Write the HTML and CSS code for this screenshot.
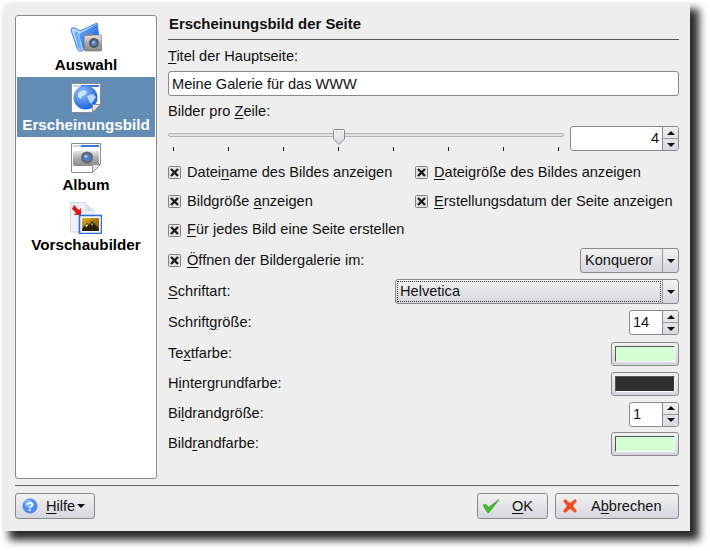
FILE: index.html
```html
<!DOCTYPE html>
<html lang="de">
<head>
<meta charset="utf-8">
<title>Erscheinungsbild der Seite</title>
<link rel="stylesheet" href="styles.css">
</head>
<body>
<svg class="defs" width="0" height="0" aria-hidden="true">
  <defs>
    <linearGradient id="blue" x1="0" y1="0" x2="1" y2="1"><stop offset="0" stop-color="#6db4fa"/><stop offset="1" stop-color="#1250dc"/></linearGradient>
    <linearGradient id="cam" x1="0" y1="0" x2="0" y2="1"><stop offset="0" stop-color="#e6e6e6"/><stop offset=".5" stop-color="#ababab"/><stop offset="1" stop-color="#8a8a8a"/></linearGradient>
    <radialGradient id="globe" cx=".35" cy=".3" r=".8"><stop offset="0" stop-color="#8fc4fb"/><stop offset="1" stop-color="#0f58d8"/></radialGradient>
    <linearGradient id="gold" x1="0" y1="0" x2="1" y2="1"><stop offset="0" stop-color="#e8b020"/><stop offset="1" stop-color="#6a4808"/></linearGradient>
    <linearGradient id="btn" x1="0" y1="0" x2="0" y2="1"><stop offset="0" stop-color="#f4f4f4"/><stop offset="1" stop-color="#d6d6de"/></linearGradient>
    <symbol id="check-x" viewBox="0 0 13 13">
      <rect x=".5" y=".5" width="12" height="12" rx="1" fill="#e4e4e8" stroke="#808080"/>
      <path d="M3 3l7 7M10 3l-7 7" stroke="#1c1c1c" stroke-width="2.400"/>
    </symbol>
    <symbol id="page" viewBox="0 0 32 32">
      <path d="M1.500 1.500H30.500V22.500L22.500 30.500H1.500Z" fill="#fff" stroke="#8c8c8c"/>
      <rect x="3" y="3" width="26" height="2" fill="#3b78d8"/>
      <rect x="3" y="3" width="8" height="2" fill="#c8d8f0"/>
    </symbol>
  </defs>
</svg>

<main class="window">
  <div class="content">
    <nav class="sidebar">
      <a class="nav-item">
        <svg class="nav-icon" viewBox="0 0 32 32">
          <path d="M1 8Q1 5 5 6L10 9 27 1 29 16 12 29Q8 30 7 26Z" fill="#bcdcfb" stroke="#3a7be0"/>
          <path d="M9 12L27 2 29 17 13 27Z" fill="url(#blue)"/>
          <path d="M4 9L8 26 12 28 8 10Z" fill="#6aaef5"/>
          <rect x="14" y="13" width="18" height="16" rx="2" fill="url(#cam)" stroke="#6e6e6e" stroke-width=".7"/>
          <rect x="16" y="11.500" width="6" height="2.500" fill="#8a8a8a"/>
          <circle cx="24" cy="21" r="5" fill="#555"/>
          <circle cx="24" cy="21" r="3" fill="#4d7fd0"/>
          <circle cx="23.500" cy="20.500" r="1" fill="#cfe2ff"/>
        </svg>
        <span>Auswahl</span>
      </a>
      <a class="nav-item is-active">
        <svg class="nav-icon" viewBox="0 0 32 32">
          <use href="#page"/>
          <circle cx="15.500" cy="15.500" r="12" fill="url(#globe)"/>
          <path d="M8 11l6-3 3 2-2 3-3 1-1 3-3-2ZM17 14l6-2 3 3-2 3-3 4-2-3Z" fill="#e6f1fd" opacity=".75"/>
          <path d="M22.500 30.500V23.500Q22.500 22.500 23.500 22.500H30.500Z" fill="#e4e4e4" stroke="#8c8c8c"/>
        </svg>
        <span>Erscheinungsbild</span>
      </a>
      <a class="nav-item">
        <svg class="nav-icon" viewBox="0 0 32 32">
          <use href="#page"/>
          <rect x="3" y="9" width="26" height="15" rx="1.500" fill="url(#cam)"/>
          <circle cx="17" cy="15.500" r="6" fill="#666"/>
          <circle cx="17" cy="15.500" r="3.800" fill="#4d7fd0"/>
          <circle cx="16" cy="14.500" r="1.200" fill="#d6e6ff"/>
          <path d="M22.500 30.500V23.500Q22.500 22.500 23.500 22.500H30.500Z" fill="#e4e4e4" stroke="#8c8c8c"/>
        </svg>
        <span>Album</span>
      </a>
      <a class="nav-item">
        <svg class="nav-icon" viewBox="0 0 32 32">
          <path d="M.5 .5H15L24 9V30H.5Z" fill="#f0f0fa" stroke="#d4d4e4"/>
          <path d="M15 .5V9H24Z" fill="#dcdcf0"/>
          <path d="M4 3l5 5 2-2v7H4l2-2-4-4Z" fill="#e01818"/>
          <rect x="9.500" y="13.500" width="22" height="18" fill="#fff" stroke="#2f6fd8" stroke-width="1.600"/>
          <rect x="12" y="16" width="17" height="13" fill="url(#gold)"/>
          <path d="M12 27l5-6 2 2 3-4 7 8v2H12Z" fill="#2c2108"/>
          <path d="M15 24l2-2 1 1-1 2ZM21 21l2 1-1 2Z" fill="#f6e3a0"/>
        </svg>
        <span>Vorschaubilder</span>
      </a>
    </nav>

    <section class="page">
      <h1 class="page-title">Erscheinungsbild der Seite</h1>
      <div class="label-row"><label><u>T</u>itel der Hauptseite:</label></div>
      <input class="text-input" type="text" value="Meine Galerie für das WWW">
      <div class="label-row"><label>Bilder pro <u>Z</u>eile:</label></div>

      <div class="slider-row">
        <div class="slider">
          <div class="groove"></div>
          <svg class="thumb" viewBox="0 0 12 16">
            <path d="M1.500 .5H10.500Q11.500 .5 11.500 1.500V10L6 15.500 .5 10V1.500Q.5 .5 1.500 .5Z" fill="url(#btn)" stroke="#8a8a8a"/>
            <path d="M3.500 3h.8M7.500 3h.8" stroke="#9a9a9a"/>
          </svg>
          <div class="ticks"><i></i><i></i><i></i><i></i><i></i><i></i><i></i><i></i></div>
        </div>
        <div class="spin spin-wide">
          <span class="spin-value is-right">4</span>
          <span class="spin-arrows"><b class="up"></b><b class="down"></b></span>
        </div>
      </div>

      <div class="check-grid">
        <div class="check"><svg class="box"><use href="#check-x"/></svg>Datei<u>n</u>ame des Bildes anzeigen</div>
        <div class="check"><svg class="box"><use href="#check-x"/></svg><u>D</u>ateigröße des Bildes anzeigen</div>
        <div class="check"><svg class="box"><use href="#check-x"/></svg>Bildgröße <u>a</u>nzeigen</div>
        <div class="check"><svg class="box"><use href="#check-x"/></svg><u>E</u>rstellungsdatum der Seite anzeigen</div>
        <div class="check"><svg class="box"><use href="#check-x"/></svg><u>F</u>ür jedes Bild eine Seite erstellen</div>
      </div>

      <div class="form">
        <div class="form-row">
          <div class="check"><svg class="box"><use href="#check-x"/></svg><u>Ö</u>ffnen der Bildergalerie im:</div>
          <div class="combo combo-konq"><span class="combo-text">Konqueror</span><span class="combo-arrow"><b class="down"></b></span></div>
        </div>
        <div class="form-row">
          <label><u>S</u>chriftart:</label>
          <div class="combo combo-font"><span class="combo-text is-focus">Helvetica</span><span class="combo-arrow"><b class="down"></b></span></div>
        </div>
        <div class="form-row">
          <label>Schrift<u>g</u>röße:</label>
          <div class="spin spin-small"><span class="spin-value">14</span><span class="spin-arrows"><b class="up"></b><b class="down"></b></span></div>
        </div>
        <div class="form-row">
          <label>Te<u>x</u>tfarbe:</label>
          <div class="color"><span class="swatch is-green"></span></div>
        </div>
        <div class="form-row is-short">
          <label>H<u>i</u>ntergrundfarbe:</label>
          <div class="color"><span class="swatch is-dark"></span></div>
        </div>
        <div class="form-row is-short">
          <label>Bi<u>l</u>drandgröße:</label>
          <div class="spin spin-small"><span class="spin-value">1</span><span class="spin-arrows"><b class="up"></b><b class="down"></b></span></div>
        </div>
        <div class="form-row is-short">
          <label>Bild<u>r</u>andfarbe:</label>
          <div class="color"><span class="swatch is-green"></span></div>
        </div>
      </div>
    </section>
  </div>

  <footer class="footer">
    <button class="btn btn-help" type="button">
      <svg class="btn-icon-help" viewBox="0 0 16 16">
        <circle cx="8" cy="8" r="7.500" fill="#4f8cf0"/>
        <circle cx="6.500" cy="5.500" r="4" fill="#a9cdfb" opacity=".6"/>
        <text x="8" y="12.500" text-anchor="middle" class="help-q">?</text>
      </svg>
      <span class="help-label"><u>H</u>ilfe</span><b class="down"></b>
    </button>
    <div class="footer-right">
      <button class="btn btn-ok" type="button">
        <svg class="btn-icon" viewBox="0 0 16 14"><path d="M0 6L3 5.500 5.500 8.500 16 .5 6 13.500 4.500 13.500Z" fill="#3cc02c" stroke="#1f9414" stroke-width=".6" stroke-linejoin="round"/></svg>
        <span class="btn-label"><u>O</u>K</span>
      </button>
      <button class="btn btn-cancel" type="button">
        <svg class="btn-icon" viewBox="0 0 16 16"><path d="M3 1l5 4 5-4 2 2-4 5 4 5-2 2-5-4-5 4-2-2 4-5-4-5Z" fill="#ee4a22" stroke="#f8a880" stroke-width=".6"/></svg>
        <span class="btn-label">A<u>b</u>brechen</span>
      </button>
    </div>
  </footer>
</main>
</body>
</html>
```
FILE: styles.css
```css
* { box-sizing: border-box; }
html, body { margin: 0; padding: 0; background: #fff; }
body {
  width: 710px;
  height: 551px;
  overflow: hidden;
  padding: 4px 0 0 4px;
  font-family: "Liberation Sans", Arial, sans-serif;
  font-size: 14.600px;
  color: #111;
}
.defs { display: block; height: 0; }
u { text-underline-offset: 2px; text-decoration-thickness: 1px; }

.window {
  width: 686px;
  height: 527px;
  background: #eeeeee;
  padding: 11px 11px 0 11px;
  box-shadow: 7px 7px 8px 2px #2a2a2a;
  display: flex;
  flex-direction: column;
}
.content { display: flex; gap: 11px; height: 464px; }

.sidebar {
  width: 142px;
  height: 464px;
  background: #fff;
  border: 1px solid #8a8a8a;
  border-radius: 3px;
  padding: 1px;
  display: flex;
  flex-direction: column;
  flex: none;
}
.nav-item {
  height: 60px;
  padding-top: 5px;
  display: flex;
  flex-direction: column;
  align-items: center;
  font-weight: bold;
  font-size: 15.200px;
  line-height: 18px;
  color: #000;
}
.nav-item.is-active { background: #628cb4; color: #fff; }
.nav-icon { width: 32px; height: 32px; display: block; margin-bottom: 2px; }

.page { width: 511px; flex: none; display: flex; flex-direction: column; }
.page-title {
  margin: 0;
  height: 25px;
  padding-left: 1px;
  border-bottom: 1px solid #555;
  font-size: 14.900px;
  line-height: 18px;
  font-weight: bold;
  color: #111;
}
.label-row { height: 31px; display: flex; align-items: center; }
.label-row + .text-input + .label-row { height: 30px; }
.text-input {
  display: block;
  width: 511px;
  height: 25px;
  border: 1px solid #8a8a8a;
  border-radius: 3px;
  background: #fff;
  padding: 0 3px;
  font: inherit;
  color: #111;
}

.slider-row { display: flex; justify-content: space-between; height: 25px; }
.slider { width: 396px; position: relative; }
.groove {
  height: 4px;
  margin-top: 7px;
  background: #e2e2e2;
  border: 1px solid #b4b4b4;
  border-radius: 2px;
}
.thumb { position: absolute; left: 165px; top: 3px; width: 12px; height: 16px; }
.ticks { display: flex; justify-content: space-between; padding: 10px 5px 0 5px; }
.ticks i { width: 1px; height: 4px; background: #222; display: block; }

.spin {
  display: flex;
  height: 25px;
  border: 1px solid #8a8a8a;
  border-radius: 3px;
  background: #fff;
  overflow: hidden;
}
.spin-wide { width: 109px; }
.spin-small { width: 50px; }
.spin-value { flex: 1; padding: 0 3px; line-height: 23px; }
.spin-value.is-right { text-align: right; }
.spin-arrows {
  width: 16px;
  flex: none;
  border-left: 1px solid #8a8a8a;
  display: flex;
  flex-direction: column;
  background: linear-gradient(#f0f0f0, #d8d8e0);
}
.spin-arrows b { flex: 1; display: flex; align-items: center; justify-content: center; }
.spin-arrows .up { border-bottom: 1px solid #9a9a9a; }
.spin-arrows .up::before {
  content: "";
  border-left: 4px solid transparent;
  border-right: 4px solid transparent;
  border-bottom: 4px solid #111;
}
.spin-arrows .down::before {
  content: "";
  border-left: 4px solid transparent;
  border-right: 4px solid transparent;
  border-top: 4px solid #111;
}
.combo-arrow .down, .btn-help > .down {
  display: block;
  width: 0;
  height: 0;
  border-left: 4px solid transparent;
  border-right: 4px solid transparent;
  border-top: 4px solid #111;
}

.check-grid {
  display: grid;
  grid-template-columns: 247px 264px;
  grid-template-rows: 29px 29px 28px;
  margin-top: 7px;
  margin-bottom: 4px;
}
.check { display: flex; align-items: center; white-space: pre; padding-bottom: 2px; }
.box { width: 13px; height: 13px; margin-right: 6px; margin-top: 2px; flex: none; }

.form { display: flex; flex-direction: column; gap: 6px; }
.form-row { display: flex; align-items: center; justify-content: space-between; height: 25px; }
.form-row.is-short { height: 24px; }
.form-row label { padding-bottom: 2px; }

.combo {
  display: flex;
  height: 25px;
  border: 1px solid #8a8a8a;
  border-radius: 3px;
  background: linear-gradient(#f2f2f2, #d6d6de);
}
.combo-konq { width: 99px; }
.combo-font { width: 284px; }
.combo-text { flex: 1; padding: 0 4px; }
.combo-konq .combo-text { line-height: 22px; padding-left: 4px; }
.combo-text.is-focus { margin: 1px; border: 1px dotted #333; padding: 0 2px; line-height: 19px; }
.combo-arrow {
  width: 16px;
  flex: none;
  border-left: 1px solid #9a9a9a;
  display: flex;
  align-items: center;
  justify-content: center;
}

.color {
  width: 68px;
  height: 24px;
  padding: 3px 3px;
  border: 1px solid #8a8a8a;
  border-radius: 3px;
  background: linear-gradient(#f2f2f2, #d6d6de);
}
.swatch { display: block; height: 100%; border: 1px solid; border-color: #555 #fff #fff #555; }
.swatch.is-green { background: #d4ffd4; }
.swatch.is-dark { background: #303030; }

.footer {
  margin-top: 6px;
  padding-top: 7px;
  border-top: 1px solid #666;
  display: flex;
  justify-content: space-between;
  height: 34px;
}
.footer-right { display: flex; gap: 7px; align-items: flex-start; }
.btn {
  height: 26px;
  border: 1px solid #8a8a8a;
  border-radius: 3px;
  background: linear-gradient(#f2f2f2, #d6d6de);
  font: inherit;
  color: #111;
  padding: 0;
  display: flex;
  align-items: center;
}
.btn-help { width: 80px; padding-left: 6px; }
.btn-icon-help { width: 16px; height: 16px; margin-right: 8px; }
.help-q { font: bold 13px "Liberation Sans", sans-serif; fill: #fff; }
.help-label { margin-right: 2px; }
.btn-ok { width: 71px; padding-left: 5px; }
.btn-cancel { width: 124px; padding-left: 6px; }
.btn-icon { width: 16px; height: 16px; flex: none; }
.btn-ok .btn-label { margin-left: 13px; }
.btn-cancel .btn-label { margin-left: 13px; }
```
